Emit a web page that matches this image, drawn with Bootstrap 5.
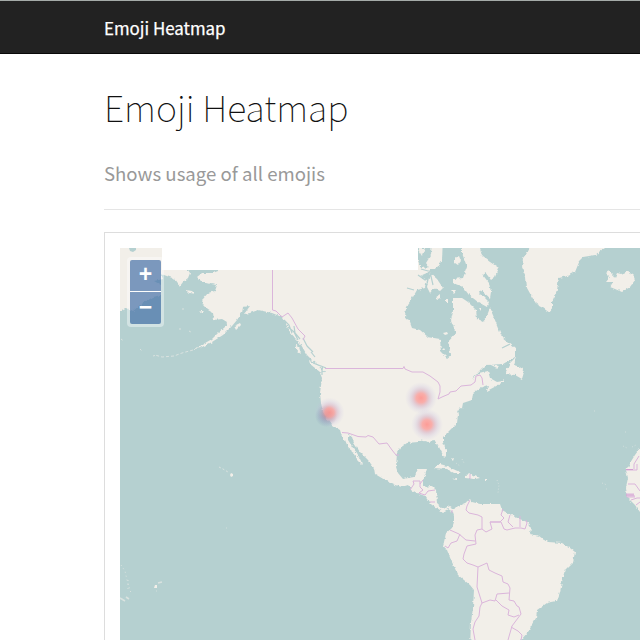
<!DOCTYPE html>
<html lang="en">
<head>
<meta charset="utf-8">
<meta name="viewport" content="width=device-width, initial-scale=1">
<title>Emoji Heatmap</title>
<link href="https://cdn.jsdelivr.net/npm/bootstrap@5.3.0/dist/css/bootstrap.min.css" rel="stylesheet">
<style>
body{font-family:"Noto Sans CJK SC","Open Sans",sans-serif;color:#333;height:100vh;overflow:hidden}
.site-bar{height:54px;background:#222;border-top:1px solid #a5aba8;border-bottom:1px solid #090909}
.page-wrap{padding-left:104px}
.site-bar .navbar-brand{display:block;padding-top:1px!important;font-size:16.9px;font-weight:400;line-height:20px;color:#fff;-webkit-text-stroke:.25px #fff}
.page-title{font-size:35.8px;font-weight:100;line-height:44px;margin:30px 0 0;color:#111}
.page-lead{font-size:18.6px;line-height:28px;color:#999;margin:31px 0 0}
.head-block{height:156px;border-bottom:1px solid #e5e5e5}
.map-panel{margin-top:22px;height:440px;padding:15px 0 0 15px;border:1px solid #ddd;border-right:0}
.map-view{width:520px;height:392px}
.zoom-box{left:7px;top:9px;width:37px;padding:3px;border-radius:4px;background:rgba(255,255,255,.4)}
.zoom-btn{width:31px;height:31px;background:rgba(0,60,136,.5);color:#fff;font:bold 23px/29px "Liberation Sans",Arial,sans-serif;border-radius:2px 2px 0 0}
.zoom-btn + .zoom-btn{margin-top:1px;height:32px;line-height:30px;border-radius:0 0 2px 2px}
.zoom-gap{left:10px;top:43px;width:31px;height:1px;background:rgba(255,255,255,.75)}
</style>
<script src="https://cdn.jsdelivr.net/npm/bootstrap@5.3.0/dist/js/bootstrap.bundle.min.js"></script>
</head>
<body>
<nav class="navbar site-bar p-0"><div class="page-wrap"><a class="navbar-brand p-0 m-0" href="#">Emoji Heatmap</a></div></nav>
<main class="page-wrap">
  <header class="head-block overflow-hidden">
    <h1 class="page-title">Emoji Heatmap</h1>
    <p class="page-lead">Shows usage of all emojis</p>
  </header>
  <section class="map-panel">
    <div class="map-view position-relative">
      <svg class="d-block" width="520" height="392" viewBox="120 248 520 392">
        <defs>
          <filter id="coast" filterUnits="userSpaceOnUse" x="100" y="230" width="560" height="430">
            <feTurbulence type="fractalNoise" baseFrequency=".28" numOctaves="2" seed="4"/>
            <feDisplacementMap in="SourceGraphic" scale="3.500" xChannelSelector="R" yChannelSelector="G"/>
          </filter>
          <radialGradient id="heat">
            <stop offset="0" stop-color="#ff8d88" stop-opacity=".85"/>
            <stop offset=".3" stop-color="#fb9895" stop-opacity=".75"/>
            <stop offset=".52" stop-color="#d0a4bd" stop-opacity=".45"/>
            <stop offset=".75" stop-color="#c1b4dc" stop-opacity=".2"/>
            <stop offset="1" stop-color="#c8c0e8" stop-opacity="0"/>
          </radialGradient>
          <radialGradient id="shade">
            <stop offset="0" stop-color="#4a5f86" stop-opacity=".55"/>
            <stop offset="1" stop-color="#5a7ba0" stop-opacity="0"/>
          </radialGradient>
        </defs>
        <path fill="#b5d0d0" d="M120 248h520v392H120z"/>
        <g fill="#f2efe9" filter="url(#coast)">
          <!-- Siberia -->
          <path d="M110 238H170V270H188L190 273 188 278 183 282 180 286 175 279 164 275 161 274 163 279 154 281 161 285 161 295 153 297 140 305 133 311 127 308 120 312 110 314Z"/>
          <!-- North America -->
          <path d="M218 260L218 271 213 273 202 273 197 277 202 282 210 284 217 285 215 291 208 293 202 300 203 305 208 310 213 313 214 320 222 319 227 322 225 327 218 333 212 339 200 346 193 349 200 348 212 342 223 335 232 326 237 320 242 313 243 307 250 306 244 314 250 313 258 310 263 311 272 313 282 317 286 323 290 332 295 338 300 343 307 355 312 360 322 368 325 372 320 373 322 378 320 393 321 403 323 412 328 420 332 425 340 430 342 437 345 440 348 447 352 450 357 460 362 465 361 461 357 453 353 448 348 440 348 435 352 437 354 443 360 452 368 460 374 468 375 474 385 480 395 485 402 487 408 485 412 490 417 493 425 496 429 502 432 505 437 508 443 512 448 509 453 512 454 515 454 522 452 528 446 533 444 542 443 548 447 550 451 560 458 575 470 585 474 590 473 607 471 622 470 650 521 650 521 640 528 632 536 618 537 610 547 603 557 601 560 592 563 577 565 570 573 562 575 552 570 548 562 543 548 542 540 536 530 534 531 528 527 522 515 517 502 510 500 504 480 504 472 502 470 499 465 503 458 506 455 509 450 506 443 509 437 504 436 490 432 486 423 487 423 480 427 469 418 469 414 477 403 479 398 473 396 467 397 453 400 448 407 443 418 442 420 440 428 442 435 441 438 445 442 453 444 458 446 456 446 450 443 442 443 437 450 430 457 423 458 415 457 410 462 408 463 403 472 400 473 393 482 387 488 385 487 391 500 384 503 381 497 382 490 378 488 371 480 373 472 379 482 368 487 365 503 364 515 357 515 348 502 337 497 325 490 308 486 318 483 322 477 319 476 310 468 302 462 298 453 298 453 312 451 320 456 333 448 342 451 355 447 358 441 352 440 339 428 337 420 330 412 328 409 320 405 318 406 307 413 297 417 290 425 288 427 280 420 276 429 272 431 267 421 268 417 258 417 238Z"/>
          <!-- Arctic islands and Baffin -->
          <path d="M432 238H443L442 260 436 269 430 269 426 263 431 255ZM462 238H477L482 256 490 262 499 268 495 277 491 280 485 272 482 274 489 283 491 292 490 298 480 290 479 292 489 302 487 307 478 302 469 295 463 287 453 283 453 279 463 278 467 267 462 253ZM430 273L437 279 443 288 440 291 434 288 430 293 427 287ZM455 258l4-2 2 5-3 4-3-2zM436 297l4-3v4l-4 2zM446 299l2 0v4h-2zM417 248h8l-3 8zM451 290h5l-2 3z"/>
          <path d="M530 238L530 248 527 253 523 258 522 268 526 277 527 288 532 297 537 305 543 308 550 313 552 308 552 302 557 290 559 278 567 276 575 272 580 260 583 257 595 255 604 248 608 238Z"/>
          <path d="M606 273L609 271 613 275 615 278 617 273 621 274 628 271 633 274 635 280 630 287 622 292 615 289 610 287 613 282 606 282 610 277Z"/>
          <path d="M516 357L510 363 505 374 515 375 522 379 524 372 520 367 514 365ZM489 364l10 2-2 2zM501 382l3-3v3z"/>
          <!-- Caribbean -->
          <path d="M434 468L440 464 447 466 453 469 462 473 454 473 447 469ZM465 475l7-1 8 4-5 1-10-1zM452 479l5-1v2zM484 479h4v2h-4zM451 459l3-1-1 3z"/>
          <path d="M650 440L640 448 635 455 630 463 626 470 628 478 626 487 627 497 635 505 640 512 650 516Z"/>
          <!-- Pacific coast islands -->
          <path d="M309 360l10 6 6 8-5-2-10-8zM295 344l4 3 2 7-3-2zM186 290l6 1 3 3-6-1zM234 326l6-3 1 2-5 5zM198 311l5 0-2 2z"/>
        </g>
        <g fill="none" stroke="#f2efe9" stroke-opacity=".6">
          <path stroke-dasharray="3 2" d="M193 350l-11 3-8 3-12 1-7-2"/>
          <path stroke-dasharray="2 4" d="M140 349l3 3M121 339l4 3M182 309h2M180 328v3M189 331l4 2M153 356l4-1"/>
          <path stroke-dasharray="2 2" d="M219 467l4 2 5 3"/>
          <path d="M497 480l2 5-1 8M623 446l4 2M632 447l4-2M625 432h2M602 483l5 2M606 489h3M226 528h1M156 591h1M456 463l4 3M462 459l2 4M594 411h1" stroke-dasharray="1 2" stroke-width=".8"/>
          <path d="M121 565l4 6 2 9 2 7 2 6M128 580v9" stroke-dasharray="1 3"/>
          <path stroke-width="1.6" d="M120 598l5 3M126 597l3 2M158 583l4-1"/>
        </g>
        <path fill="#f2efe9" d="M231 473l2 1 0 2-2 1-1-2zM155 585h2v3h-3z"/>
        <!-- Fjords and inlets -->
        <path fill="none" stroke="#b5d0d0" stroke-width="1.2" d="M284 320l5 5 3 8M288 327l6 5 4 8M294 326l1 7 5 6M303 338l4 8M307 346l6 6M311 352l4 5M313 363l8 3 5 2M322 369v6M407 288l7 2M418 275l7 5 8-7M421 269l7 2 10 0M430 272l3 13M502 348l8-4M247 309l-3 3"/>
        <path fill="#b5d0d0" d="M129 248h7v2l-3 2-3-1z"/>
        <path fill="#f2efe9" d="M443 333l4-1 1 2-3 1zM442 350l2-2 1 2zM479 308h2v3z"/>
        <!-- National borders -->
        <g fill="none" stroke="#dbb5db" stroke-width="1" stroke-linejoin="round">
          <path d="M272.5 270V310L276 311 282 317 288 313 292 318 298 329 305 336 303 340M325 368.500H403L404 366.500 405 369 412 372 423 372 430 376 438 382 440 386 440 392 438 399 442 397 449 394 450 392 456 391 461 386 471 385 475 382 476 376 480 375 482 378 483 385M342 432.500L348 433 358 436.500 366 437 368 435.500 373 437 379 444 387 443 392 450 396 455 399 455M410 490L414 484 413 481H420V487L423 490 419 493 425 495 428 491 435 490M430 502h5M470 474v5M420 484l3-4"/>
          <path d="M470 500L467 506 466 510 469 513 478 515 482 517V529L477 530 475 535 476 544 467 546 464 554 463 559 467 563 473 565 478 567 487 563 489 570 495 573 502 576 503 582 508 584 510 588 509 600 514 601 517 606 519 607 521 614 515 622 512 626 508 640M450 530L459 534 466 540 475 541M460 534L457 541 451 543 448 548 445 546M482 529L486 532 492 529 490 522 501 522 504 529 507 530 515 528 521 528 525 529 527 523 526 520M490 522h10l4-4-3-3 2-6M510 515l-2 7 5 5M520 516l0 11M478 567L477 587 482 603 490 600 495 601 497 594 509 593M496 600L502 606 509 610 508 615 514 617 519 615M482 603L480 607 479 616 475 622 473 629 475 640M511 627L518 631 522 635 521 640"/>
          <path d="M626 470H637V464M634 469v-5l5-8M628 484h7l5 7M626 494h8M626 496h9M627 497h8M631 500l6-2h4M636 505l4-3M452 510v3"/>
        </g>
        <path fill="none" stroke="#d49ed3" d="M626 469.500H633M626 495h8"/>
        <circle cx="326" cy="416" r="11" fill="url(#shade)"/>
        <g fill="url(#heat)"><circle cx="329.500" cy="412.500" r="15"/><circle cx="421" cy="398" r="16"/><circle cx="427" cy="424.500" r="16"/></g>
        <!-- Tiles not loaded -->
        <path fill="#fff" d="M162 248H418V270H162z"/>
      </svg>
      <div class="zoom-box position-absolute">
        <div class="zoom-btn text-center" role="button">+</div>
        <div class="zoom-btn text-center" role="button">−</div>
      </div>
      <div class="zoom-gap position-absolute"></div>
    </div>
  </section>
</main>
</body>
</html>
